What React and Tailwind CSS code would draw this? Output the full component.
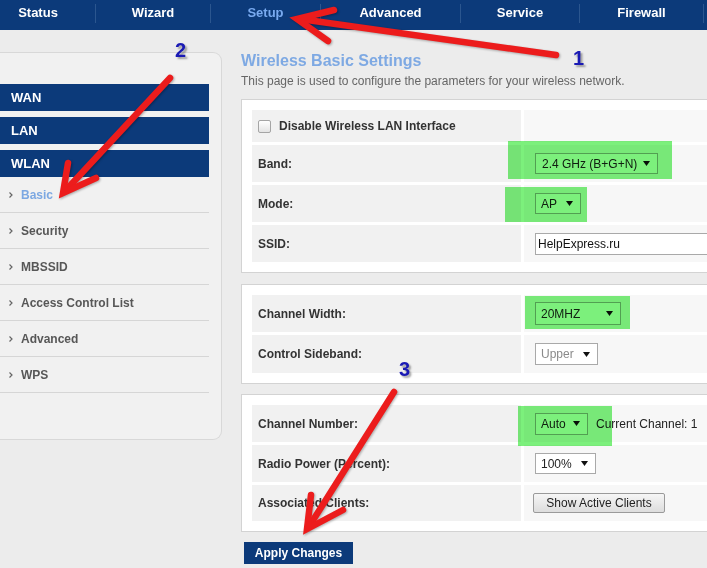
import React from 'react';

const NAV = [
  { label: 'Status', w: 'w-[114px] ml-[-19px]' },
  { label: 'Wizard', w: 'w-[114px]' },
  { label: 'Setup', w: 'w-[109px]', active: true },
  { label: 'Advanced', w: 'w-[139px]' },
  { label: 'Service', w: 'w-[118px]' },
  { label: 'Firewall', w: 'w-[123px]' },
];

const SUB = ['Basic', 'Security', 'MBSSID', 'Access Control List', 'Advanced', 'WPS'];

const Caret = () => (
  <svg width="7" height="5" viewBox="0 0 7 5" className="shrink-0">
    <path d="M0 0 H7 L3.5 5 Z" fill="#111" />
  </svg>
);

const Select = ({ value, className, muted }) => (
  <div
    className={`flex h-[21px] items-center justify-between border border-[#a9a9a9] bg-white pl-[5px] pr-[7px] text-[12px] ${
      muted ? 'text-[#8a8a8a]' : 'text-[#222]'
    } ${className}`}
  >
    <span>{value}</span>
    <Caret />
  </div>
);

const Row = ({ label, h, children }) => (
  <>
    <div className={`flex items-center bg-[#f1f1f1] pl-[6px] text-[12px] font-bold text-[#333] ${h}`}>
      {label}
    </div>
    <div className={`flex items-center gap-[8px] bg-[#f7f7f7] pl-[11px] text-[12px] text-[#333] ${h}`}>
      {children}
    </div>
  </>
);

const Panel = ({ children, className }) => (
  <div className={`w-[500px] border border-r-0 border-[#d3d3d3] bg-white pl-[10px] pt-[10px] ${className}`}>
    <div className="grid grid-cols-[269px_1fr] gap-[3px]">{children}</div>
  </div>
);

export default function App() {
  return (
    <div className="relative isolate h-[568px] w-[707px] overflow-hidden bg-[#ececec] font-['Liberation_Sans',Arial,sans-serif]">
      {/* top navigation */}
      <nav className="flex h-[30px] items-center bg-[#0c3a7a]">
        {NAV.map((n) => (
          <React.Fragment key={n.label}>
            <div
              className={`flex h-full shrink-0 items-center justify-center pb-[4px] text-[13px] font-bold ${
                n.active ? 'text-[#79aaf0]' : 'text-white'
              } ${n.w}`}
            >
              {n.label}
            </div>
            <div className="mb-[4px] h-[19px] w-px shrink-0 bg-[#2b568f]" />
          </React.Fragment>
        ))}
      </nav>

      <div className="flex">
        {/* side menu */}
        <aside className="mt-[22px] h-[388px] w-[222px] shrink-0 rounded-r-[9px] border border-l-0 border-[#d8d8d8] bg-[#f1f1f1] pt-[31px]">
          <div className="flex flex-col gap-[6px]">
            {['WAN', 'LAN', 'WLAN'].map((m) => (
              <div
                key={m}
                className="flex h-[27px] w-[209px] items-center bg-[#0c3a7a] pl-[11px] text-[13px] font-bold text-white"
              >
                {m}
              </div>
            ))}
          </div>
          {SUB.map((s, i) => (
            <div
              key={s}
              className="flex h-[36px] w-[209px] items-center gap-[8px] border-b border-[#d6d6d6] pl-[9px] text-[12px] font-bold"
            >
              <svg width="4" height="6" viewBox="0 0 4 6">
                <path d="M0.5 0.5 L3 3 L0.5 5.5" fill="none" stroke="#666" strokeWidth="1.2" />
              </svg>
              <span className={i === 0 ? 'text-[#7ca8e2]' : 'text-[#575757]'}>{s}</span>
            </div>
          ))}
        </aside>

        {/* main content */}
        <main className="ml-[19px] pt-[22px]">
          <h1 className="text-[16px] font-bold leading-[18px] text-[#7ea9e3]">Wireless Basic Settings</h1>
          <p className="mt-[4px] text-[12px] leading-[14px] text-[#666]">
            This page is used to configure the parameters for your wireless network.
          </p>

          <Panel className="mt-[11px] pb-[10px]">
            <div className="flex h-[32px] items-center gap-[8px] bg-[#f1f1f1] pl-[6px] text-[12px] font-bold text-[#333]">
              <span className="h-[13px] w-[13px] rounded-[2px] border border-[#a5a5a5] bg-gradient-to-b from-white to-[#e4e4e4]" />
              Disable Wireless LAN Interface
            </div>
            <div className="h-[32px] bg-[#f8f8f8]" />
            <Row label="Band:" h="h-[37px]">
              <Select value="2.4 GHz (B+G+N)" className="w-[123px] pl-[6px]" />
            </Row>
            <Row label="Mode:" h="h-[37px]">
              <Select value="AP" className="w-[46px]" />
            </Row>
            <Row label="SSID:" h="h-[37px]">
              <div className="flex h-[22px] w-[200px] items-center border border-[#a9a9a9] bg-white pl-[2px] text-[12px] text-[#111]">
                HelpExpress.ru
              </div>
            </Row>
          </Panel>

          <Panel className="mt-[11px] pb-[10px]">
            <Row label="Channel Width:" h="h-[37px]">
              <Select value="20MHZ" className="w-[86px] h-[23px]" />
            </Row>
            <Row label="Control Sideband:" h="h-[38px]">
              <Select value="Upper" muted className="w-[63px] h-[22px]" />
            </Row>
          </Panel>

          <Panel className="mt-[10px] pb-[10px]">
            <Row label="Channel Number:" h="h-[37px]">
              <Select value="Auto" className="w-[53px] h-[22px]" />
              <span className="text-[12px] text-[#222]">Current Channel: 1</span>
            </Row>
            <Row label="Radio Power (Percent):" h="h-[37px]">
              <Select value="100%" className="w-[61px]" />
            </Row>
            <Row label="Associated Clients:" h="h-[36px]">
              <button className="-ml-[2px] h-[20px] w-[132px] rounded-[2px] border border-[#9a9a9a] bg-gradient-to-b from-[#f6f6f6] to-[#dddddd] text-[12px] text-[#222]">
                Show Active Clients
              </button>
            </Row>
          </Panel>

          <button className="ml-[3px] mt-[10px] h-[22px] w-[109px] bg-[#0c3a7a] text-[12px] font-bold text-white">
            Apply Changes
          </button>
        </main>
      </div>

      {/* green highlight marks */}
      <div className="absolute left-[508px] top-[141px] h-[38px] w-[164px] bg-[#7cf07c] mix-blend-multiply" />
      <div className="absolute left-[505px] top-[187px] h-[35px] w-[82px] bg-[#7cf07c] mix-blend-multiply" />
      <div className="absolute left-[525px] top-[296px] h-[33px] w-[105px] bg-[#7cf07c] mix-blend-multiply" />
      <div className="absolute left-[518px] top-[406px] h-[40px] w-[94px] bg-[#7cf07c] mix-blend-multiply" />

      {/* red annotation arrows */}
      <svg
        className="pointer-events-none absolute inset-0 drop-shadow-[1px_1px_1px_rgba(0,0,0,0.3)]"
        width="707"
        height="568"
        viewBox="0 0 707 568"
      >
        <g fill="none" stroke="#ec1c1c" strokeWidth="6.5" strokeLinecap="round" strokeLinejoin="miter">
          <path d="M556 55 L300 19" />
          <path d="M334 10 L297 19 L328 41" />
          <path d="M170 78 L66 190" />
          <path d="M68 163 L63 193 L96 178" />
          <path d="M394 392 L310 525" />
          <path d="M311 495 L307 529 L343 510" />
        </g>
      </svg>

      <span className="absolute left-[573px] top-[48px] text-[20px] font-bold leading-none text-[#1a1ab4] [text-shadow:2px_2px_2px_rgba(0,0,0,0.35)]">
        1
      </span>
      <span className="absolute left-[175px] top-[40px] text-[20px] font-bold leading-none text-[#1a1ab4] [text-shadow:2px_2px_2px_rgba(0,0,0,0.35)]">
        2
      </span>
      <span className="absolute left-[399px] top-[359px] text-[20px] font-bold leading-none text-[#1a1ab4] [text-shadow:2px_2px_2px_rgba(0,0,0,0.35)]">
        3
      </span>
    </div>
  );
}
